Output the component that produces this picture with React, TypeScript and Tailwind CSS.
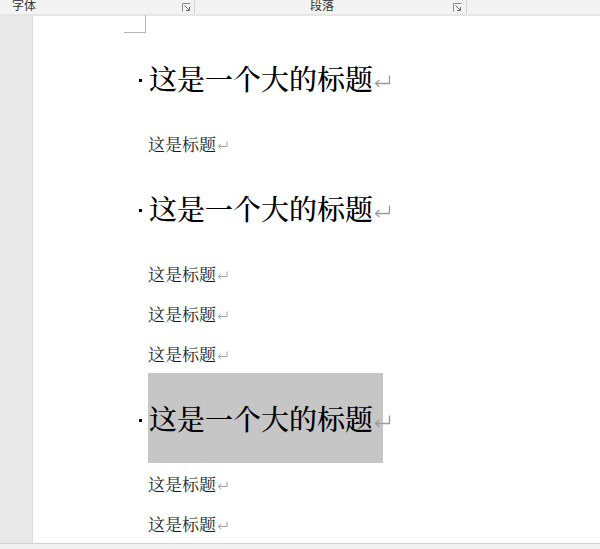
import React from "react";

const FONT = '"Noto Serif CJK SC", "Noto Sans CJK SC", serif';

function Launcher() {
  return (
    <svg width="9" height="9" viewBox="0 0 9 9" className="block">
      <path d="M0.5 8.5 V0.5 H8.5" fill="none" stroke="#8a8a8a" strokeWidth="1" />
      <path d="M2.5 2.5 L7 7" stroke="#6a6a6a" strokeWidth="1" />
      <path d="M4 7.5 H7.5 V4" fill="none" stroke="#6a6a6a" strokeWidth="1" />
    </svg>
  );
}

function ReturnMark({ big }: { big?: boolean }) {
  if (big) {
    return (
      <svg width="17" height="12" viewBox="0 0 17 12" className="relative ml-[1px] mt-[6px] shrink-0">
        <path d="M15.5 0.5 V8.5 H2" fill="none" stroke="#9a9a9a" strokeWidth="1.3" />
        <path d="M5.5 5 L1.5 8.5 L5.5 12" fill="none" stroke="#9a9a9a" strokeWidth="1.3" />
      </svg>
    );
  }
  return (
    <svg width="11" height="9" viewBox="0 0 11 9" className="ml-[1px] mt-[4px] shrink-0">
      <path d="M10 0.5 V5.5 H1.5" fill="none" stroke="#a0a0a0" strokeWidth="1" />
      <path d="M4 3 L1.2 5.5 L4 8" fill="none" stroke="#a0a0a0" strokeWidth="1" />
    </svg>
  );
}

function Heading({ selected }: { selected?: boolean }) {
  return (
    <div className="relative h-[90px] flex items-center pl-[116px]">
      {selected ? (
        <div className="absolute left-[115px] top-0 w-[235px] h-[90px] bg-[#c6c6c6]" />
      ) : null}
      <span className="relative text-[28px] leading-none text-black whitespace-nowrap font-medium">
        <span className="absolute left-[-10px] top-[15px] w-[3px] h-[3px] bg-black" />
        这是一个大的标题
      </span>
      <ReturnMark big />
    </div>
  );
}

function Small() {
  return (
    <div className="h-[40px] flex items-center pl-[115px]">
      <span className="text-[17px] leading-none text-[#1a1a1a] whitespace-nowrap">这是标题</span>
      <ReturnMark />
    </div>
  );
}

export default function App() {
  return (
    <div
      className="w-[600px] h-[549px] overflow-hidden flex flex-col bg-white"
      style={{ fontFamily: FONT }}
    >
      {/* ribbon group labels */}
      <div
        className="h-[14px] shrink-0 bg-[#f3f3f3] flex items-start text-[12px] leading-none text-[#333] overflow-hidden"
        style={{ fontFamily: '"Noto Sans CJK SC", sans-serif' }}
      >
        <div className="w-[195px] h-full flex items-start border-r border-[#d4d4d4] relative">
          <span className="ml-[12px] mt-[-1px]">字体</span>
          <div className="absolute left-[182px] top-[3px]"><Launcher /></div>
        </div>
        <div className="w-[272px] h-full flex items-start border-r border-[#d4d4d4] relative">
          <span className="ml-[115px] mt-[-1px]">段落</span>
          <div className="absolute left-[258px] top-[3px]"><Launcher /></div>
        </div>
      </div>
      <div className="h-[2px] shrink-0 bg-[#e6e6e6]" />

      {/* body */}
      <div className="flex-1 flex min-h-0">
        <div className="w-[33px] shrink-0 bg-[#e9e9e9] border-r border-[#dcdcdc]" />
        <div className="flex-1 relative bg-white">
          {/* margin corner mark */}
          <div className="absolute left-[91px] top-[-1px] w-[22px] h-[18px] border-r border-b border-[#b5b5b5]" />
          <div className="pt-[17px] flex flex-col">
            <Heading />
            <Small />
            <Heading />
            <Small />
            <Small />
            <Small />
            <Heading selected />
            <Small />
            <Small />
          </div>
        </div>
      </div>

      {/* status strip */}
      <div className="h-[6px] shrink-0 bg-[#f0f0f0] border-t border-[#d2d2d2]" />
    </div>
  );
}
